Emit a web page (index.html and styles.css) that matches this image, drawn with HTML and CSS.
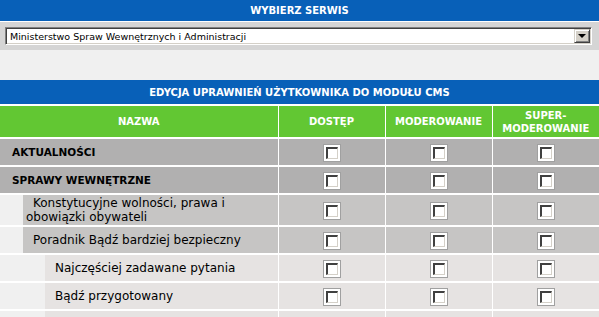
FILE: index.html
```html
<!DOCTYPE html>
<html lang="pl">
<head>
    <meta charset="UTF-8">
    <meta name="viewport" content="width=device-width, initial-scale=1.0">
    <title>Edycja uprawnień użytkownika</title>
    <link rel="stylesheet" href="styles.css">
</head>
<body>
    <div class="site-bar">WYBIERZ SERWIS</div>
    <div class="site-picker">
        <div class="combo">
            <span class="combo-value">Ministerstwo Spraw Wewnętrznych i Administracji</span>
            <span class="combo-button"><span class="combo-arrow"></span></span>
        </div>
    </div>

    <table class="perms">
        <colgroup>
            <col class="col-name">
            <col class="col-check">
            <col class="col-check">
            <col class="col-check">
        </colgroup>
        <tr>
            <th colspan="4" class="perms-title">EDYCJA UPRAWNIEŃ UŻYTKOWNIKA DO MODUŁU CMS</th>
        </tr>
        <tr class="perms-head">
            <th>NAZWA</th>
            <th>DOSTĘP</th>
            <th>MODEROWANIE</th>
            <th>SUPER-<br>MODEROWANIE</th>
        </tr>

        <!-- level 0 -->
        <tr class="lvl-0">
            <td class="name"><div class="label">AKTUALNOŚCI</div></td>
            <td class="check"><span class="cb"><span class="cb-box"></span></span></td>
            <td class="check"><span class="cb"><span class="cb-box"></span></span></td>
            <td class="check"><span class="cb"><span class="cb-box"></span></span></td>
        </tr>
        <tr class="lvl-0">
            <td class="name"><div class="label">SPRAWY WEWNĘTRZNE</div></td>
            <td class="check"><span class="cb"><span class="cb-box"></span></span></td>
            <td class="check"><span class="cb"><span class="cb-box"></span></span></td>
            <td class="check"><span class="cb"><span class="cb-box"></span></span></td>
        </tr>

        <!-- level 1 -->
        <tr class="lvl-1">
            <td class="name"><div class="label tall">Konstytucyjne wolności, prawa i<br>obowiązki obywateli</div></td>
            <td class="check"><span class="cb"><span class="cb-box"></span></span></td>
            <td class="check"><span class="cb"><span class="cb-box"></span></span></td>
            <td class="check"><span class="cb"><span class="cb-box"></span></span></td>
        </tr>
        <tr class="lvl-1">
            <td class="name"><div class="label">Poradnik Bądź bardziej bezpieczny</div></td>
            <td class="check"><span class="cb"><span class="cb-box"></span></span></td>
            <td class="check"><span class="cb"><span class="cb-box"></span></span></td>
            <td class="check"><span class="cb"><span class="cb-box"></span></span></td>
        </tr>

        <!-- level 2 -->
        <tr class="lvl-2">
            <td class="name"><div class="label">Najczęściej zadawane pytania</div></td>
            <td class="check"><span class="cb"><span class="cb-box"></span></span></td>
            <td class="check"><span class="cb"><span class="cb-box"></span></span></td>
            <td class="check"><span class="cb"><span class="cb-box"></span></span></td>
        </tr>
        <tr class="lvl-2">
            <td class="name"><div class="label">Bądź przygotowany</div></td>
            <td class="check"><span class="cb"><span class="cb-box"></span></span></td>
            <td class="check"><span class="cb"><span class="cb-box"></span></span></td>
            <td class="check"><span class="cb"><span class="cb-box"></span></span></td>
        </tr>
        <!-- next row only peeks in at the bottom of the window -->
        <tr class="lvl-2">
            <td class="name"><div class="label"></div></td>
            <td class="check"></td>
            <td class="check"></td>
            <td class="check"></td>
        </tr>
    </table>
</body>
</html>
```

FILE: styles.css
```css
body {
    margin: 0;
    background: #f0f0f0;
    font-family: "DejaVu Sans", Tahoma, sans-serif;
    color: #000;
}

.site-bar {
    height: 21px;
    line-height: 21px;
    background: #0860b8;
    color: #fff;
    font-size: 10px;
    font-weight: bold;
    text-align: center;
    border-bottom: 1px solid #fff;
}

.site-picker {
    background: #d5d5d5;
    padding: 5px 7px 5px 5px;
}

.combo {
    display: flex;
    align-items: center;
    height: 18px;
    box-sizing: border-box;
    background: #fff;
    border: 1px solid;
    border-color: #808080 #fff #fff #808080;
    box-shadow: inset 1px 1px #404040, inset -1px -1px #d4d0c8;
    padding: 1px;
}

.combo-value {
    flex: 1;
    font-size: 9.5px;
    padding-left: 3px;
}

.combo-button {
    display: flex;
    align-items: center;
    justify-content: center;
    width: 16px;
    height: 14px;
    box-sizing: border-box;
    background: #d4d0c8;
    border: 1px solid;
    border-color: #d4d0c8 #404040 #404040 #d4d0c8;
    box-shadow: inset 1px 1px #fff, inset -1px -1px #808080;
}

.combo-arrow {
    width: 0;
    height: 0;
    border-left: 4px solid transparent;
    border-right: 4px solid transparent;
    border-top: 4px solid #000;
}

.perms {
    width: 599px;
    margin-top: 30px;
    border-collapse: collapse;
    table-layout: fixed;
}

.col-name {
    width: 278px;
}

.perms th,
.perms td {
    padding: 0;
}

.perms tr + tr > * {
    border-top: 2px solid #fff;
}

.perms th + th,
.perms td + td {
    border-left: 1px solid #fff;
}

.perms-title {
    height: 24px;
    background: #0860b8;
    color: #fff;
    font-size: 10px;
    font-weight: bold;
}

.perms-head th {
    height: 31px;
    background: #62c733;
    color: #fff;
    font-size: 10px;
    font-weight: bold;
    line-height: 13px;
}

.label {
    display: flex;
    align-items: center;
    height: 26px;
    font-size: 12px;
}

.label.tall {
    height: 30px;
    line-height: 14px;
}

.lvl-0 td {
    background: #b1b0b0;
}

.lvl-0 .label {
    padding-left: 12px;
    font-size: 10.5px;
    font-weight: bold;
}

.lvl-1 .check {
    background: #c6c5c4;
}

.lvl-1 .label {
    margin-left: 23px;
    padding-left: 3px;
    text-indent: 7px;
    background: #c6c5c4;
}

.lvl-2 .check {
    background: #e6e3e2;
}

.lvl-2 .label {
    margin-left: 45px;
    padding-left: 3px;
    text-indent: 7px;
    background: #e6e3e2;
}

.check {
    text-align: center;
}

.cb {
    display: inline-block;
    vertical-align: middle;
    width: 18px;
    height: 18px;
    box-sizing: border-box;
    padding: 2px;
    border: 1px solid #a0a0a0;
    background: #fff;
}

.cb-box {
    display: block;
    width: 12px;
    height: 12px;
    box-sizing: border-box;
    border-style: solid;
    border-width: 2px 1px 1px 2px;
    border-color: #404040 #d4d0c8 #d4d0c8 #404040;
    background: #fff;
}
```
